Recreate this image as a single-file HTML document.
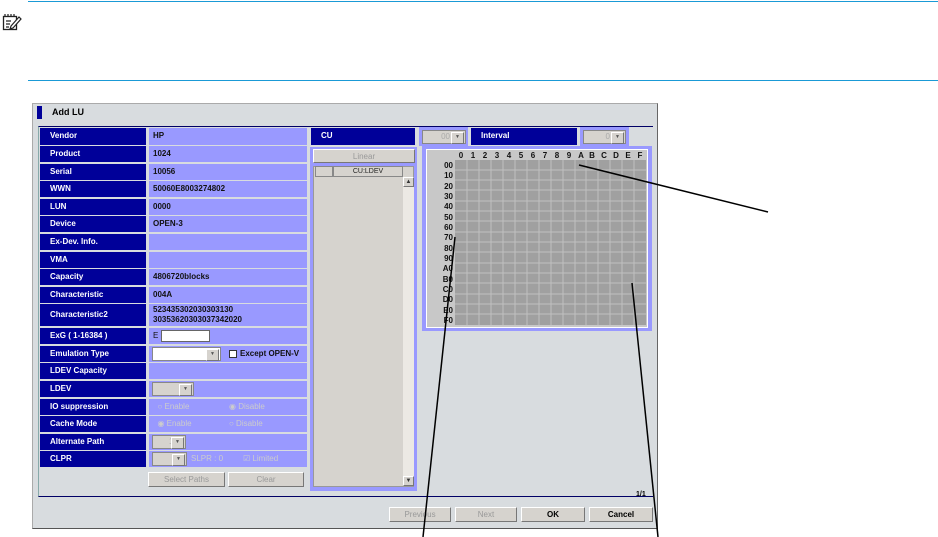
<!DOCTYPE html>
<html><head><style>
body{margin:0;width:938px;height:537px;background:#fff;position:relative;overflow:hidden;font-family:"Liberation Sans",Arial,sans-serif;font-size:8px;font-weight:bold}
div{position:absolute;box-sizing:border-box}
.l{background:#000099;color:#fff;padding-left:10px;line-height:16px}
.v{background:#9999ff;color:#111;padding-left:4px;line-height:16px}
.btn{background:#d6d3ce;border:1px solid #fff;border-right-color:#777;border-bottom-color:#777;text-align:center;color:#999;line-height:13px;font-weight:normal}
.cb{background:#d6d3ce;border:1px solid #888;height:14px}
.cb i{position:absolute;right:1px;top:1px;width:11px;height:10px;background:#d6d3ce;border:1px solid #fff;border-right-color:#777;border-bottom-color:#777;font-style:normal;font-size:5px;line-height:8px;text-align:center;color:#555}
.g{color:#aaa;font-weight:normal}
</style></head><body>
<div style="left:28px;top:1px;width:910px;height:1px;background:#1a9ad6"></div>
<div style="left:28px;top:80px;width:910px;height:1px;background:#1a9ad6"></div>
<svg style="position:absolute;left:2px;top:12px" width="20" height="20" viewBox="0 0 20 20"><rect x="1.5" y="4.5" width="13" height="13" fill="none" stroke="#222" stroke-width="1.3"/><path d="M3 2v3M6 2v3M9 2v3M12 2v3M4 9h5M4 12h4M4 15h3" stroke="#222" stroke-width="1.2"/><path d="M9 14l8-9 2 2-8 9-3 1z" fill="#fff" stroke="#222" stroke-width="1.2"/></svg>

<div style="left:32px;top:103px;width:626px;height:426px;background:#d8dcdf;border:1px solid #aaa;border-right-color:#666;border-bottom-color:#555"></div>
<div style="left:37px;top:106px;width:5px;height:13px;background:#000099"></div>
<div style="left:52px;top:107px;font-size:9px;color:#000">Add LU</div>
<div style="left:38px;top:126px;width:615px;height:371px;border-top:1px solid #000066;border-left:1px solid #8aa;border-bottom:1px solid #000066"></div>
<div style="left:636px;top:491px;font-size:7px">1/1</div>

<div class="l" style="left:40px;top:128px;width:106px;height:17px">Vendor</div><div class="v" style="left:149px;top:128px;width:158px;height:17px">HP</div>
<div class="l" style="left:40px;top:146px;width:106px;height:16px">Product</div><div class="v" style="left:149px;top:146px;width:158px;height:16px">1024</div>
<div class="l" style="left:40px;top:164px;width:106px;height:16px">Serial</div><div class="v" style="left:149px;top:164px;width:158px;height:16px">10056</div>
<div class="l" style="left:40px;top:181px;width:106px;height:16px">WWN</div><div class="v" style="left:149px;top:181px;width:158px;height:16px">50060E8003274802</div>
<div class="l" style="left:40px;top:199px;width:106px;height:16px">LUN</div><div class="v" style="left:149px;top:199px;width:158px;height:16px">0000</div>
<div class="l" style="left:40px;top:216px;width:106px;height:16px">Device</div><div class="v" style="left:149px;top:216px;width:158px;height:16px">OPEN-3</div>
<div class="l" style="left:40px;top:234px;width:106px;height:16px">Ex-Dev. Info.</div><div class="v" style="left:149px;top:234px;width:158px;height:16px"></div>
<div class="l" style="left:40px;top:252px;width:106px;height:16px">VMA</div><div class="v" style="left:149px;top:252px;width:158px;height:16px"></div>
<div class="l" style="left:40px;top:269px;width:106px;height:16px">Capacity</div><div class="v" style="left:149px;top:269px;width:158px;height:16px">4806720blocks</div>
<div class="l" style="left:40px;top:287px;width:106px;height:16px">Characteristic</div><div class="v" style="left:149px;top:287px;width:158px;height:16px">004A</div>
<div class="l" style="left:40px;top:304px;width:106px;height:22px;line-height:22px">Characteristic2</div><div class="v" style="left:149px;top:304px;width:158px;height:22px;line-height:10px;padding-top:1px">523435302030303130<br>30353620303037342020</div>
<div class="l" style="left:40px;top:328px;width:106px;height:16px">ExG ( 1-16384 )</div><div class="v" style="left:149px;top:328px;width:158px;height:16px;font-weight:normal">E<div style="left:12px;top:2px;width:49px;height:12px;background:#fff;border:1px solid #666"></div></div>
<div class="l" style="left:40px;top:346px;width:106px;height:16px">Emulation Type</div><div class="v" style="left:149px;top:346px;width:158px;height:16px"><div class="cb" style="left:3px;top:1px;width:69px;background:#fff"><i>▼</i></div><div style="left:80px;top:4px;width:8px;height:8px;background:#fff;border:1px solid #333"></div><span style="position:absolute;left:91px;top:0">Except OPEN-V</span></div>
<div class="l" style="left:40px;top:363px;width:106px;height:16px">LDEV Capacity</div><div class="v" style="left:149px;top:363px;width:158px;height:16px"></div>
<div class="l" style="left:40px;top:381px;width:106px;height:16px">LDEV</div><div class="v" style="left:149px;top:381px;width:158px;height:16px"><div class="cb" style="left:3px;top:1px;width:42px"><i>▼</i></div></div>
<div class="l" style="left:40px;top:399px;width:106px;height:16px">IO suppression</div><div class="v g" style="left:149px;top:399px;width:158px;height:16px;color:#ccc">&nbsp;&nbsp;○ Enable<span style="position:absolute;left:80px">◉ Disable</span></div>
<div class="l" style="left:40px;top:416px;width:106px;height:16px">Cache Mode</div><div class="v g" style="left:149px;top:416px;width:158px;height:16px;color:#ccc">&nbsp;&nbsp;◉ Enable<span style="position:absolute;left:80px">○ Disable</span></div>
<div class="l" style="left:40px;top:434px;width:106px;height:16px">Alternate Path</div><div class="v" style="left:149px;top:434px;width:158px;height:16px"><div class="cb" style="left:3px;top:1px;width:34px;color:#aaa;font-weight:normal;line-height:12px;padding-left:16px">1<i>▼</i></div></div>
<div class="l" style="left:40px;top:451px;width:106px;height:16px">CLPR</div><div class="v" style="left:149px;top:451px;width:158px;height:16px;color:#ccc;font-weight:normal"><div class="cb" style="left:3px;top:1px;width:35px"><i>▼</i></div><span style="position:absolute;left:42px">SLPR : 0</span><span style="position:absolute;left:94px">☑ Limited</span></div>
<div class="btn" style="left:148px;top:472px;width:77px;height:15px">Select Paths</div>
<div class="btn" style="left:228px;top:472px;width:76px;height:15px">Clear</div>

<div class="l" style="left:311px;top:128px;width:104px;height:17px;padding-left:10px">CU</div>
<div style="left:310px;top:147px;width:107px;height:344px;background:#9999ff"></div>
<div class="btn" style="left:313px;top:149px;width:102px;height:14px">Linear</div>
<div style="left:313px;top:166px;width:101px;height:321px;background:#d6d3ce;border:1px solid #999"></div>
<div style="left:315px;top:166px;width:18px;height:11px;border:1px solid #888"></div>
<div style="left:333px;top:166px;width:70px;height:11px;border:1px solid #888;text-align:center;font-weight:normal;font-size:7px;line-height:9px;color:#222">CU:LDEV</div>
<div style="left:403px;top:177px;width:11px;height:309px;background:#ece9e4"></div>
<div class="btn" style="left:403px;top:177px;width:11px;height:10px;font-size:6px;color:#333;line-height:8px">▲</div>
<div class="btn" style="left:403px;top:476px;width:11px;height:10px;font-size:6px;color:#333;line-height:8px">▼</div>

<div style="left:419px;top:127px;width:49px;height:19px;background:#9999ff"></div>
<div class="cb" style="left:422px;top:130px;width:44px;color:#aaa;font-weight:normal;text-align:right;padding-right:15px;line-height:12px">00<i>▼</i></div>
<div class="l" style="left:471px;top:128px;width:106px;height:17px">Interval</div>
<div style="left:580px;top:127px;width:49px;height:19px;background:#9999ff"></div>
<div class="cb" style="left:583px;top:130px;width:43px;color:#aaa;font-weight:normal;text-align:right;padding-right:15px;line-height:12px">0<i>▼</i></div>

<div style="left:422px;top:146px;width:230px;height:185px;background:#9999ff"></div>
<div style="left:426px;top:149px;width:222px;height:179px;background:#c8c8c8;border:1px solid #fff"></div>
<svg style="position:absolute;left:426px;top:149px" width="222" height="179">
<rect x="29" y="11" width="191" height="165" fill="#a0a0a0"/>
<g stroke="#c0c0c0" stroke-width="1">
<path d="M41 11v165M53 11v165M65 11v165M77 11v165M89 11v165M101 11v165M113 11v165M125 11v165M137 11v165M149 11v165M160 11v165M172 11v165M184 11v165M196 11v165M208 11v165"/>
<path d="M29 21h191M29 31h191M29 41h191M29 52h191M29 62h191M29 72h191M29 83h191M29 93h191M29 103h191M29 114h191M29 124h191M29 134h191M29 145h191M29 155h191M29 165h191"/>
</g>
<g font-family="Liberation Sans" font-size="8" font-weight="bold" fill="#111" text-anchor="middle">
<text x="35" y="9">0</text><text x="47" y="9">1</text><text x="59" y="9">2</text><text x="71" y="9">3</text><text x="83" y="9">4</text><text x="95" y="9">5</text><text x="107" y="9">6</text><text x="119" y="9">7</text><text x="131" y="9">8</text><text x="143" y="9">9</text><text x="155" y="9">A</text><text x="166" y="9">B</text><text x="178" y="9">C</text><text x="190" y="9">D</text><text x="202" y="9">E</text><text x="214" y="9">F</text>
</g>
<g font-family="Liberation Sans" font-size="8" font-weight="bold" fill="#111" text-anchor="end">
<text x="27" y="19">00</text><text x="27" y="29">10</text><text x="27" y="40">20</text><text x="27" y="50">30</text><text x="27" y="60">40</text><text x="27" y="71">50</text><text x="27" y="81">60</text><text x="27" y="91">70</text><text x="27" y="102">80</text><text x="27" y="112">90</text><text x="27" y="122">A0</text><text x="27" y="133">B0</text><text x="27" y="143">C0</text><text x="27" y="153">D0</text><text x="27" y="164">E0</text><text x="27" y="174">F0</text>
</g></svg>

<div class="btn" style="left:389px;top:507px;width:62px;height:15px">Previous</div>
<div class="btn" style="left:455px;top:507px;width:62px;height:15px">Next</div>
<div class="btn" style="left:521px;top:507px;width:64px;height:15px;color:#000;font-weight:bold">OK</div>
<div class="btn" style="left:589px;top:507px;width:64px;height:15px;color:#000;font-weight:bold">Cancel</div>

<svg style="position:absolute;left:0;top:0" width="938" height="537"><g stroke="#000" stroke-width="1.5"><line x1="579" y1="165" x2="768" y2="212"/><line x1="455" y1="237" x2="423" y2="537"/><line x1="632" y1="283" x2="658" y2="537"/></g></svg>
</body></html>
